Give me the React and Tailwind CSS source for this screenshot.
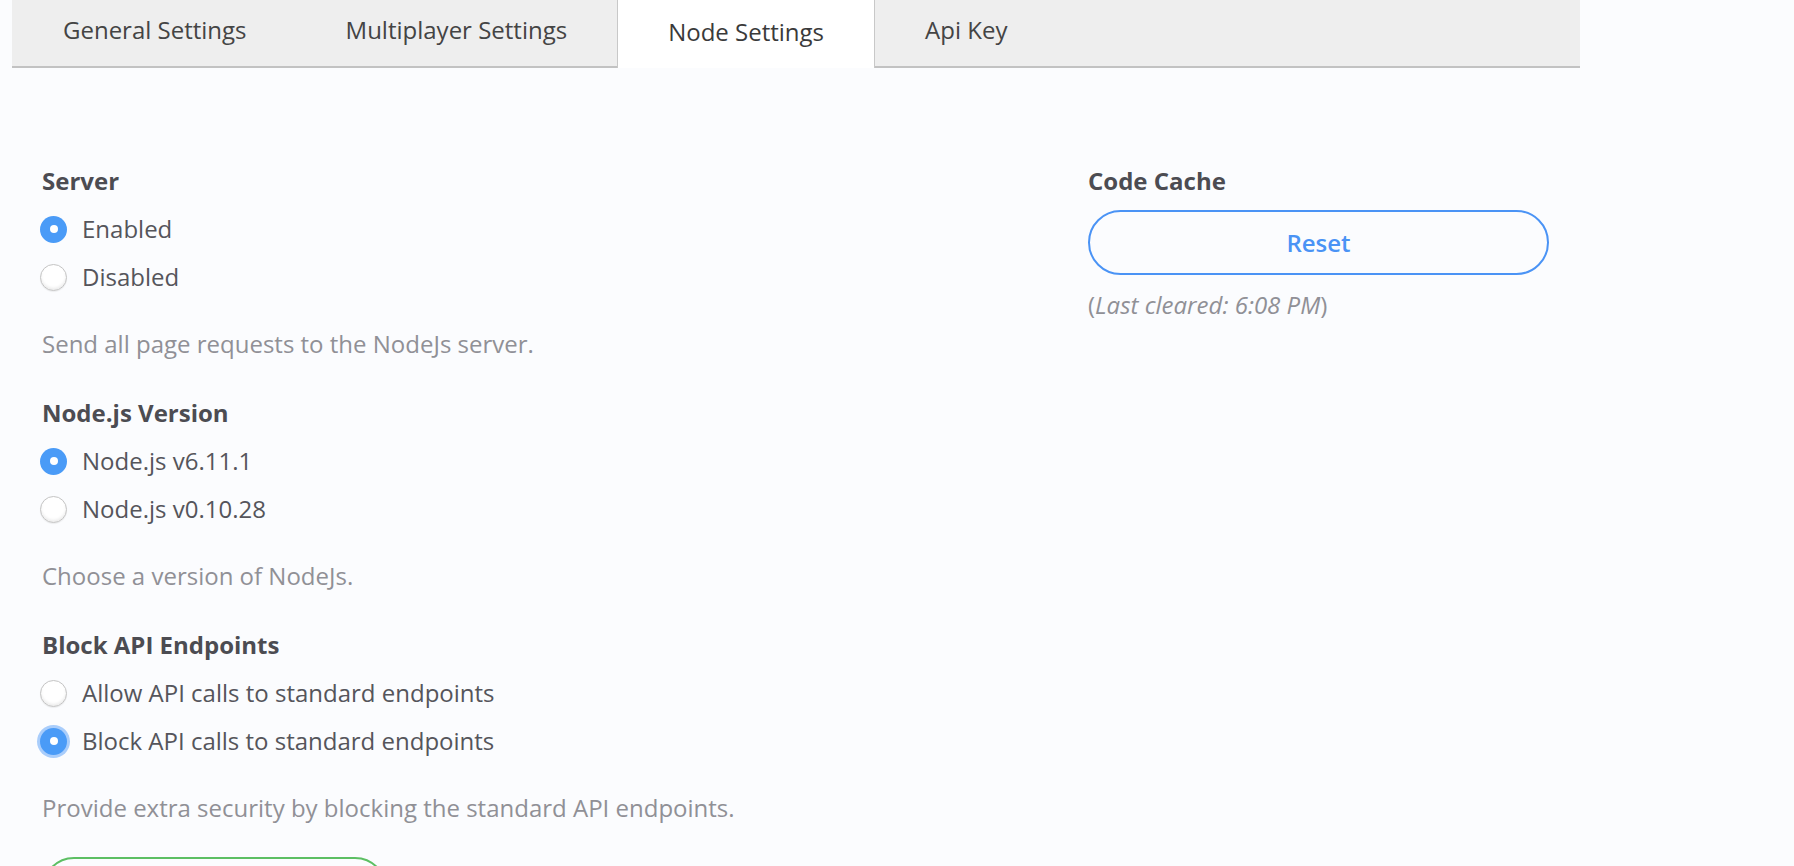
import React, { useState } from 'react';

const tabs = ['General Settings', 'Multiplayer Settings', 'Node Settings', 'Api Key'];

function Radio({ checked, focused, label, onClick }) {
  return (
    <label className="flex h-[48px] cursor-pointer items-center gap-[15px]" onClick={onClick}>
      <span
        className={
          checked
            ? '-ml-[2px] flex h-[27px] w-[27px] items-center justify-center rounded-full bg-[#4a9bf7] ' +
              (focused ? 'ring-[3px] ring-[#a9cdfb]' : '')
            : '-ml-[2px] h-[27px] w-[27px] rounded-full border border-[#c4c4c4] bg-white shadow-[inset_0_-2px_3px_rgba(0,0,0,0.08),0_1px_1px_rgba(0,0,0,0.06)]'
        }
      >
        {checked && <span className="h-[8px] w-[8px] rounded-full bg-white" />}
      </span>
      <span className="text-[24px] leading-[32px] text-[#55555b]">{label}</span>
    </label>
  );
}

function Group({ title, options, value, onChange, note, focused }) {
  return (
    <div className="mb-[37px]">
      <h3 className="mb-[8px] text-[24px] font-bold leading-[32px] text-[#4c4c52]">{title}</h3>
      {options.map((o, i) => (
        <Radio key={o} label={o} checked={value === i} focused={focused && value === i} onClick={() => onChange(i)} />
      ))}
      <p className="mt-[27px] text-[24px] leading-[32px] text-[#909096]">{note}</p>
    </div>
  );
}

export default function App() {
  const [tab, setTab] = useState(2);
  const [server, setServer] = useState(0);
  const [version, setVersion] = useState(0);
  const [block, setBlock] = useState(1);

  return (
    <div className="min-h-screen bg-[#fbfcfe]" style={{ fontFamily: '"Open Sans", "Noto Sans", sans-serif' }}>
      <div className="pl-[12px]">
        <div className="flex h-[68px] w-[1568px] border-b-2 border-[#c2c2c2] bg-[#eeeeee]">
          {tabs.map((t, i) => (
            <button
              key={t}
              onClick={() => setTab(i)}
              className={
                (i === 0 ? 'pl-[51px] pr-[49px] ' : 'px-[50px] ') +
                (i === tab
                  ? '-mb-[2px] h-[68px] border-x border-[#c8c8c8] bg-white pb-[4px] text-[24px] text-[#3a3a3a]'
                  : 'h-[66px] pb-[6px] text-[24px] text-[#444444]')
              }
            >
              {t}
            </button>
          ))}
        </div>
      </div>

      <div className="flex pl-[42px] pt-[97px]">
        <div className="w-[1046px]">
          <Group
            title="Server"
            options={['Enabled', 'Disabled']}
            value={server}
            onChange={setServer}
            note="Send all page requests to the NodeJs server."
          />
          <Group
            title="Node.js Version"
            options={['Node.js v6.11.1', 'Node.js v0.10.28']}
            value={version}
            onChange={setVersion}
            note="Choose a version of NodeJs."
          />
          <Group
            title="Block API Endpoints"
            options={['Allow API calls to standard endpoints', 'Block API calls to standard endpoints']}
            value={block}
            onChange={setBlock}
            focused
            note="Provide extra security by blocking the standard API endpoints."
          />
          <button className="-mt-[4px] h-[64px] w-[345px] rounded-full border-2 border-[#5cbf63] text-[24px] font-semibold text-[#5cbf63]">
            Save
          </button>
        </div>

        <div className="w-[461px]">
          <h3 className="mb-[13px] text-[24px] font-bold leading-[32px] text-[#4c4c52]">Code Cache</h3>
          <button className="h-[65px] w-[461px] rounded-full border-2 border-[#4a93f5] text-[24px] font-semibold text-[#4a93f5]">
            Reset
          </button>
          <p className="mt-[14px] text-[24px] leading-[32px] text-[#909096]">
            (<span className="italic">Last cleared: 6:08 PM</span>)
          </p>
        </div>
      </div>
    </div>
  );
}
